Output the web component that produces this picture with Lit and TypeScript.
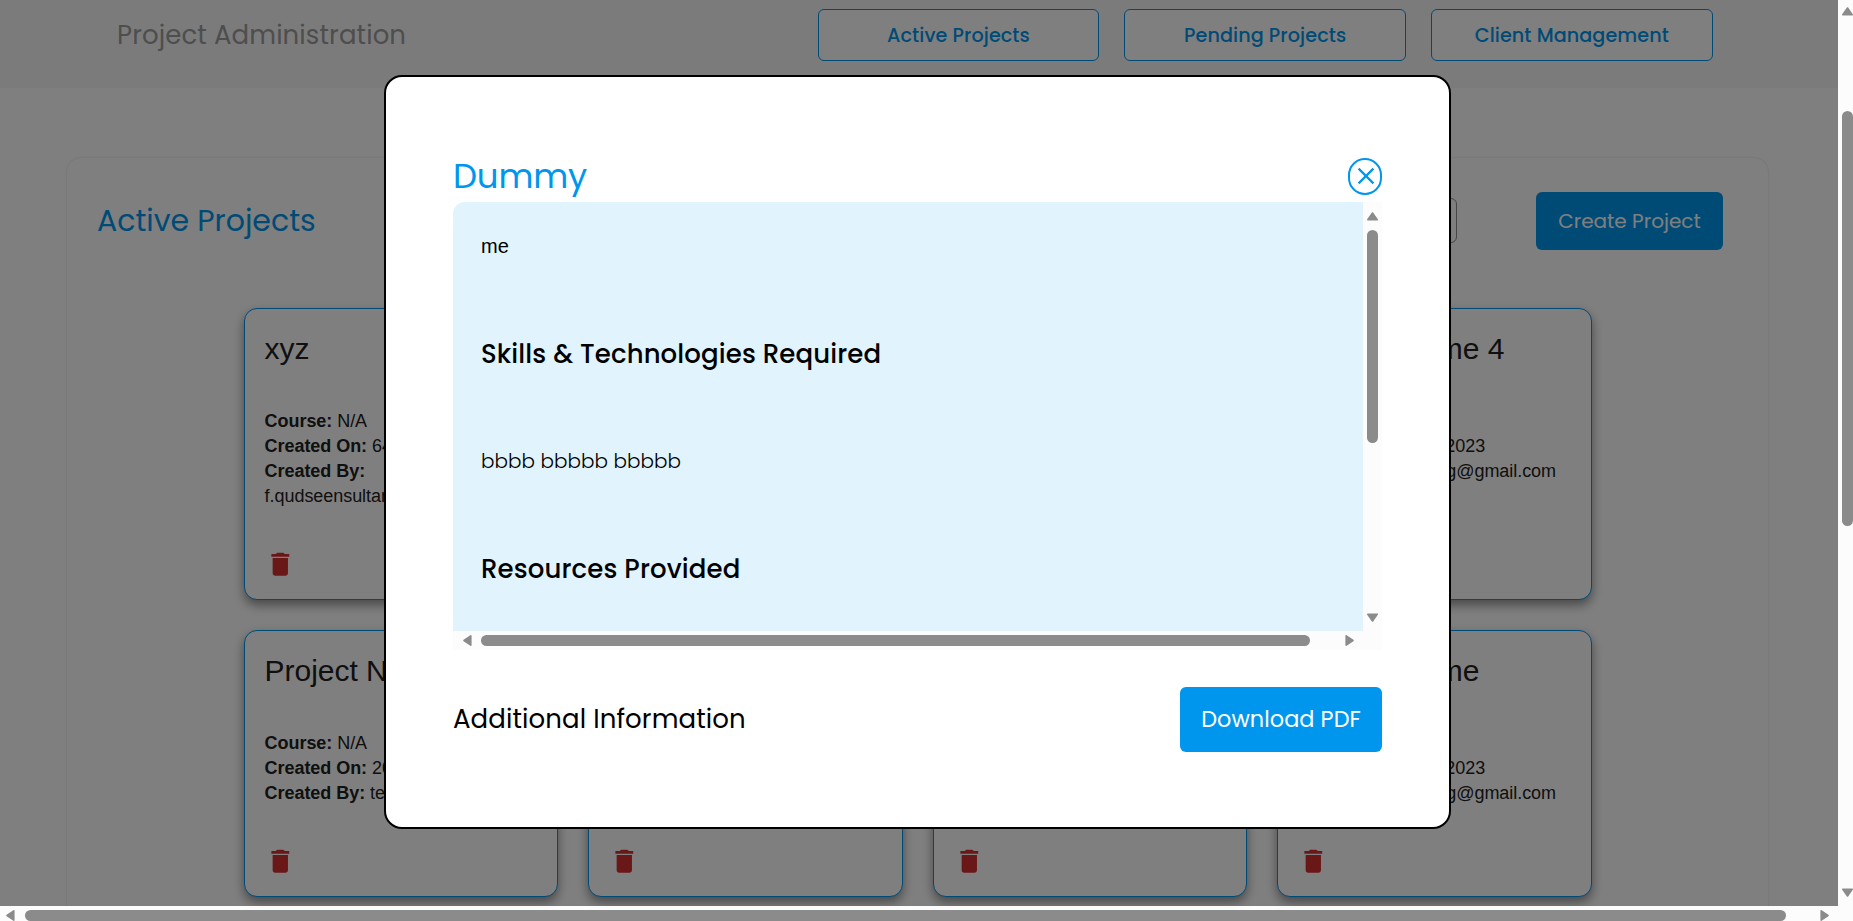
import { LitElement, html, css, svg } from "lit";
import { customElement, property } from "lit/decorators.js";

interface Project {
  name: string;
  course: string;
  createdOn: string;
  createdBy: string;
}

const FIRST_ROW: Project[] = [
  { name: "xyz", course: "N/A", createdOn: "64/9/2023", createdBy: "f.qudseensultana@gmail.com" },
  { name: "Project Name 2", course: "N/A", createdOn: "10/9/2023", createdBy: "testing@gmail.com" },
  { name: "Project Name 3", course: "N/A", createdOn: "10/9/2023", createdBy: "testing@gmail.com" },
  { name: "Project Name 4", course: "N/A", createdOn: "10/9/2023", createdBy: "testing@gmail.com" },
];
const SECOND_ROW: Project[] = [
  { name: "Project Name", course: "N/A", createdOn: "20/9/2023", createdBy: "testing@gmail.com" },
  { name: "Project Name", course: "N/A", createdOn: "10/9/2023", createdBy: "testing@gmail.com" },
  { name: "Project Name", course: "N/A", createdOn: "10/9/2023", createdBy: "testing@gmail.com" },
  { name: "Project Name", course: "N/A", createdOn: "10/9/2023", createdBy: "testing@gmail.com" },
];

const arrow = (d: string, w: number, h: number) =>
  html`<svg width=${w} height=${h} viewBox="0 0 ${w} ${h}">${svg`<path d=${d} fill="#8b8b8b" stroke="#8b8b8b" stroke-width="1.6" stroke-linejoin="round"></path>`}</svg>`;
const UP = arrow("M5.5 1 L10.2 7.8 H0.8 Z", 11, 9);
const DOWN = arrow("M5.5 8 L10.2 1.2 H0.8 Z", 11, 9);
const LEFT = arrow("M1 5.5 L7.8 0.8 V10.2 Z", 9, 11);
const RIGHT = arrow("M8 5.5 L1.2 0.8 V10.2 Z", 9, 11);

@customElement("project-card")
export class ProjectCard extends LitElement {
  @property({ attribute: false }) project!: Project;

  static styles = css`
    :host {
      display: flex;
      flex-direction: column;
      box-sizing: border-box;
      min-width: 0;
      border: 1px solid #0096ed;
      border-radius: 13px;
      background: #fff;
      padding: 20px 20px 19.5px;
      box-shadow: 0 5px 11px rgba(0, 0, 0, 0.44);
      font-family: "Liberation Sans", Arial, sans-serif;
      color: #212121;
    }
    .name { font-size: 30px; line-height: 40px; margin-bottom: 40px; white-space: nowrap; letter-spacing: -0.03px; }
    .line { font-size: 18px; line-height: 25px; letter-spacing: -0.05px; }
    .trash { margin-top: auto; width: 30.6px; height: 30.6px; fill: #d32f2f; display: block; }
  `;

  render() {
    const p = this.project;
    return html`
      <div class="name">${p.name}</div>
      <div class="line"><b>Course:</b> ${p.course}</div>
      <div class="line"><b>Created On:</b> ${p.createdOn}</div>
      <div class="line"><b>Created By:</b> ${p.createdBy}</div>
      <svg class="trash" viewBox="0 0 24 24">
        <path d="M6 19c0 1.1.9 2 2 2h8c1.1 0 2-.9 2-2V7H6v12zM19 4h-3.5l-1-1h-5l-1 1H5v2h14V4z"></path>
      </svg>
    `;
  }
}

@customElement("app-root")
export class AppRoot extends LitElement {
  static styles = css`
    :host {
      display: grid;
      grid-template: 906px 15px / 1838px 15px;
      width: 1853px;
      height: 921px;
      overflow: hidden;
      background: #fcfcfc;
      font-family: Poppins, Inter, sans-serif;
    }
    svg { display: block; flex: none; }
    .viewport { position: relative; overflow: hidden; background: #fff; }
    .header {
      display: flex;
      box-sizing: border-box;
      height: 88px;
      padding: 9px 125.3px 0 117px;
      background: #f7f7f7;
      justify-content: space-between;
    }
    .brand { font-size: 26px; line-height: 53px; color: #9c9c9c; letter-spacing: 0.1px; }
    .tabs { display: flex; gap: 25px; }
    .tab {
      box-sizing: border-box;
      width: 281.7px;
      height: 52px;
      border: 1px solid #0096ed;
      border-radius: 6px;
      background: #fff;
      color: #0096ed;
      text-align: center;
      font-size: 19.2px;
      font-weight: 500;
      line-height: 52px;
      letter-spacing: 0.07px;
    }
    .panel {
      box-sizing: border-box;
      margin: 70px 70px 0 67px;
      height: 900px;
      border-radius: 14px;
      box-shadow: 0 0 2px rgba(0, 0, 0, 0.2);
      padding: 34px 45px 0 30px;
    }
    .bar { display: flex; align-items: center; height: 58px; }
    .title { flex: 1; font-size: 30px; line-height: 58px; color: #0096ed; }
    .search {
      box-sizing: border-box;
      width: 300px;
      height: 45px;
      border: 1px solid #8c8c8c;
      border-radius: 6px;
      margin: 0 79px 1px 0;
    }
    .create {
      width: 187px;
      height: 58px;
      border-radius: 6px;
      background: #0096ed;
      color: #fff;
      text-align: center;
      font-size: 20px;
      line-height: 58px;
    }
    .cards {
      display: grid;
      grid-template: 292px 267px / repeat(4, 1fr);
      gap: 30px;
      width: 1348px;
      margin: 58px 0 0 146.6px;
    }
    .overlay {
      position: absolute;
      inset: 0;
      background: rgba(0, 0, 0, 0.5);
    }
    .modal {
      position: absolute;
      left: 384px;
      top: 75px;
      box-sizing: border-box;
      width: 1067px;
      height: 754px;
      border: 2px solid #000;
      border-radius: 18px;
      background: #fff;
      padding: 77px 67px 75px;
      display: flex;
      flex-direction: column;
      color: #000;
    }
    .modal-head { display: flex; justify-content: space-between; height: 45px; align-items: center; margin-bottom: 3px; }
    .modal-title { font-size: 34px; line-height: 45px; color: #0096ed; letter-spacing: -0.2px; }
    .close {
      box-sizing: border-box;
      width: 34px;
      height: 37px;
      border: 2px solid #0096ed;
      border-radius: 17px;
      display: grid;
      place-items: center;
      padding: 0 0 1px 2px;
    }
    .scroller {
      display: grid;
      grid-template: 429px 19px / 910px 19px;
      border-radius: 12px 0 0 0;
      overflow: hidden;
      background: #fcfcfc;
    }
    .doc {
      background: #e1f3fd;
      padding: 28px 28px 0;
      display: flex;
      flex-direction: column;
      gap: 75.5px;
      overflow: hidden;
      line-height: 32px;
    }
    .plain { font: 20px/32px "Liberation Sans", Arial, sans-serif; }
    .heading { font-size: 26px; font-weight: 500; letter-spacing: 0.12px; }
    .light { font-size: 20px; font-weight: 300; }
    .vbar { display: flex; flex-direction: column; align-items: center; box-sizing: border-box; }
    .hbar { display: flex; align-items: center; box-sizing: border-box; }
    .thumb { background: #8b8b8b; border-radius: 5.5px; flex: none; }
    .vbar .thumb { width: 11px; }
    .hbar .thumb { height: 11px; }
    .end { margin-top: auto; }
    .hbar .end { margin: 0 0 0 auto; }
    .doc-v { padding: 10px 0 9px; }
    .doc-v .thumb { height: 213px; margin-top: 9px; }
    .doc-h { padding: 0 9.5px 0 9.5px; }
    .doc-h .thumb { width: 829px; margin-left: 9.5px; }
    .page-v { padding: 7px 0 9px; align-items: flex-end; }
    .page-v .thumb { height: 415px; margin-top: 95px; }
    .page-h { padding: 0 9.5px 0 6px; align-items: flex-end; }
    .page-h .thumb { width: 1761px; margin-left: 10px; }
    .modal-foot { display: flex; justify-content: space-between; align-items: center; margin-top: 37px; }
    .info { font-size: 26px; line-height: 65px; letter-spacing: 0.1px; }
    .download {
      width: 202px;
      height: 65px;
      border-radius: 6px;
      background: #0096ed;
      color: #fff;
      text-align: center;
      font-size: 22.4px;
      line-height: 65px;
      letter-spacing: 0.06px;
    }
  `;

  render() {
    return html`
      <div class="viewport">
        <div class="header">
          <div class="brand">Project Administration</div>
          <div class="tabs">
            ${["Active Projects", "Pending Projects", "Client Management"].map(
              (t) => html`<div class="tab">${t}</div>`
            )}
          </div>
        </div>
        <div class="panel">
          <div class="bar">
            <div class="title">Active Projects</div>
            <div class="search"></div>
            <div class="create">Create Project</div>
          </div>
          <div class="cards">
            ${[...FIRST_ROW, ...SECOND_ROW].map(
              (p) => html`<project-card .project=${p}></project-card>`
            )}
          </div>
        </div>
        <div class="overlay"></div>
        <div class="modal">
          <div class="modal-head">
            <div class="modal-title">Dummy</div>
            <div class="close">
              <svg width="18" height="18" viewBox="0 0 18 18">
                <path d="M1.6 1.6 L16.4 16.4 M16.4 1.6 L1.6 16.4" stroke="#0096ed" stroke-width="2.2" fill="none"></path>
              </svg>
            </div>
          </div>
          <div class="scroller">
            <div class="doc">
              <div class="plain">me</div>
              <div class="heading">Skills &amp; Technologies Required</div>
              <div class="light">bbbb bbbbb bbbbb</div>
              <div class="heading">Resources Provided</div>
            </div>
            <div class="vbar doc-v">${UP}<div class="thumb"></div><div class="end">${DOWN}</div></div>
            <div class="hbar doc-h">${LEFT}<div class="thumb"></div><div class="end">${RIGHT}</div></div>
          </div>
          <div class="modal-foot">
            <div class="info">Additional Information</div>
            <div class="download">Download PDF</div>
          </div>
        </div>
      </div>
      <div class="vbar page-v">${UP}<div class="thumb"></div><div class="end">${DOWN}</div></div>
      <div class="hbar page-h">${LEFT}<div class="thumb"></div><div class="end">${RIGHT}</div></div>
    `;
  }
}
